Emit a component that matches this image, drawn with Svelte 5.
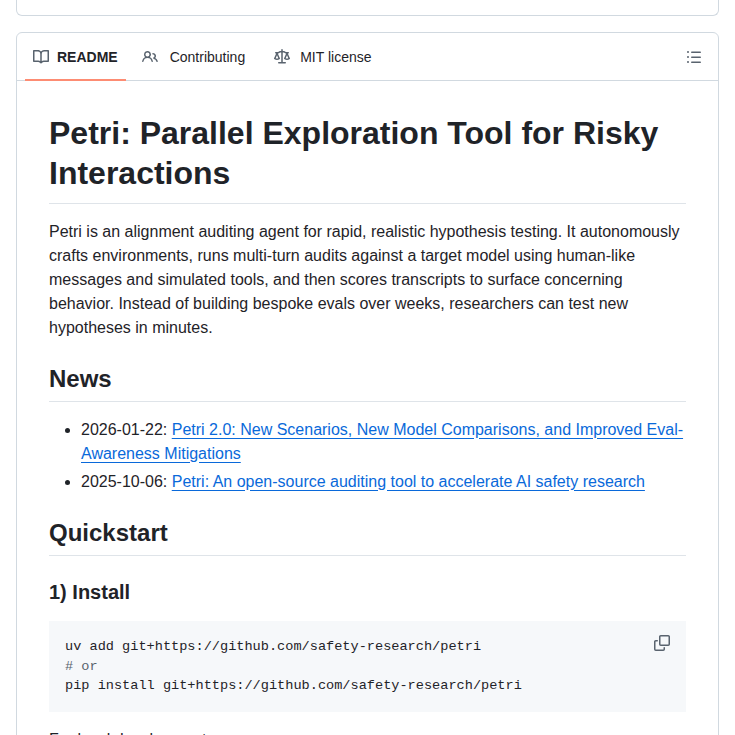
<script>
  const tabs = [
    { label: 'README', icon: 'book', active: true },
    { label: 'Contributing', icon: 'people' },
    { label: 'MIT license', icon: 'law' }
  ]
  const icons = {
    book: 'M0 1.75A.75.75 0 0 1 .75 1h4.253c1.227 0 2.317.59 3 1.501A3.743 3.743 0 0 1 11.006 1h4.245a.75.75 0 0 1 .75.75v10.5a.75.75 0 0 1-.75.75h-4.507a2.25 2.25 0 0 0-1.591.659l-.622.621a.75.75 0 0 1-1.06 0l-.622-.621A2.25 2.25 0 0 0 5.258 13H.75a.75.75 0 0 1-.75-.75Zm7.251 10.324.004-5.073-.002-2.253A2.25 2.25 0 0 0 5.003 2.5H1.5v9h3.757a3.75 3.75 0 0 1 1.994.574ZM8.755 4.75l-.004 7.322a3.752 3.752 0 0 1 1.992-.572H14.5v-9h-3.495a2.25 2.25 0 0 0-2.25 2.25Z',
    people: 'M2 5.5a3.5 3.5 0 1 1 5.898 2.549 5.508 5.508 0 0 1 3.034 4.084.75.75 0 1 1-1.482.235 4 4 0 0 0-7.9 0 .75.75 0 0 1-1.482-.236A5.507 5.507 0 0 1 3.102 8.05 3.493 3.493 0 0 1 2 5.5ZM11 4a3.001 3.001 0 0 1 2.22 5.018 5.01 5.01 0 0 1 2.56 3.012.749.749 0 0 1-.885.954.752.752 0 0 1-.549-.514 3.507 3.507 0 0 0-2.522-2.372.75.75 0 0 1-.574-.73v-.352a.75.75 0 0 1 .416-.672A1.5 1.5 0 0 0 11 5.5.75.75 0 0 1 11 4Zm-5.5-.5a2 2 0 1 0-.001 3.999A2 2 0 0 0 5.5 3.5Z',
    law: 'M8.75.75V2h.985c.304 0 .603.08.867.231l1.29.736c.038.022.08.033.124.033h2.234a.75.75 0 0 1 0 1.5h-.427l2.111 4.692a.75.75 0 0 1-.154.838l-.53-.53.529.531-.001.002-.002.002-.006.006-.006.005-.01.01-.045.04c-.21.176-.441.327-.686.45C14.556 10.78 13.88 11 13 11a4.498 4.498 0 0 1-2.023-.454 3.544 3.544 0 0 1-.686-.45l-.045-.04-.016-.015-.006-.006-.004-.004v-.001a.75.75 0 0 1-.154-.838L12.178 4.5h-.162c-.305 0-.604-.079-.868-.231l-1.29-.736a.245.245 0 0 0-.124-.033H8.75V13h2.5a.75.75 0 0 1 0 1.5h-6.5a.75.75 0 0 1 0-1.5h2.5V3.5h-.984a.245.245 0 0 0-.124.033l-1.289.737c-.265.15-.564.23-.869.23h-.162l2.112 4.692a.75.75 0 0 1-.154.838l-.53-.53.529.531-.001.002-.002.002-.006.006-.016.015-.045.04c-.21.176-.441.327-.686.45C4.556 10.78 3.88 11 3 11a4.498 4.498 0 0 1-2.023-.454 3.544 3.544 0 0 1-.686-.45l-.045-.04-.016-.015-.006-.006-.004-.004v-.001a.75.75 0 0 1-.154-.838L2.178 4.5H1.75a.75.75 0 0 1 0-1.5h2.234a.249.249 0 0 0 .125-.033l1.288-.737c.265-.15.564-.23.869-.23h.984V.75a.75.75 0 0 1 1.5 0Zm2.945 8.477c.285.135.718.273 1.305.273s1.02-.138 1.305-.273L13 6.327Zm-10 0c.285.135.718.273 1.305.273s1.02-.138 1.305-.273L3 6.327Z'
  }
</script>

<div class="page">
  <div class="card-stub"></div>

  <div class="card">
    <nav class="tabbar">
      <ul class="tabs">
        {#each tabs as tab}
          <li class="tab {tab.icon}" class:active={tab.active}>
            <svg class="icon" viewBox="0 0 16 16" width="16" height="16"><path d={icons[tab.icon]} /></svg>
            <span>{tab.label}</span>
          </li>
        {/each}
      </ul>
      <svg class="icon outline" viewBox="0 0 16 16" width="16" height="16"><path d="M5.75 2.5h8.5a.75.75 0 0 1 0 1.5h-8.5a.75.75 0 0 1 0-1.5Zm0 5h8.5a.75.75 0 0 1 0 1.5h-8.5a.75.75 0 0 1 0-1.5Zm0 5h8.5a.75.75 0 0 1 0 1.5h-8.5a.75.75 0 0 1 0-1.5ZM2 14a1 1 0 1 1 0-2 1 1 0 0 1 0 2Zm1-6a1 1 0 1 1-2 0 1 1 0 0 1 2 0ZM2 4a1 1 0 1 1 0-2 1 1 0 0 1 0 2Z" /></svg>
    </nav>

    <article class="markdown">
      <h1>Petri: Parallel Exploration Tool for Risky Interactions</h1>
      <p>Petri is an alignment auditing agent for rapid, realistic hypothesis testing. It autonomously crafts environments, runs multi-turn audits against a target model using human-like messages and simulated tools, and then scores transcripts to surface concerning behavior. Instead of building bespoke evals over weeks, researchers can test new hypotheses in minutes.</p>

      <h2>News</h2>
      <ul class="news">
        <li>2026-01-22: <a href="#a">Petri 2.0: New Scenarios, New Model Comparisons, and Improved Eval-Awareness Mitigations</a></li>
        <li>2025-10-06: <a href="#b">Petri: An open-source auditing tool to accelerate AI safety research</a></li>
      </ul>

      <h2>Quickstart</h2>
      <h3>1) Install</h3>
      <div class="code">
        <pre>uv add git+https://github.com/safety-research/petri
<span class="comment"># or</span>
pip install git+https://github.com/safety-research/petri</pre>
        <svg class="copy" viewBox="0 0 16 16" width="16" height="16"><path d="M0 6.75C0 5.784.784 5 1.75 5h1.5a.75.75 0 0 1 0 1.5h-1.5a.25.25 0 0 0-.25.25v7.5c0 .138.112.25.25.25h7.5a.25.25 0 0 0 .25-.25v-1.5a.75.75 0 0 1 1.5 0v1.5A1.75 1.75 0 0 1 9.25 16h-7.5A1.75 1.75 0 0 1 0 14.25Z" /><path d="M5 1.75C5 .784 5.784 0 6.75 0h7.5C15.216 0 16 .784 16 1.75v7.5A1.75 1.75 0 0 1 14.25 11h-7.5A1.75 1.75 0 0 1 5 9.25Zm1.75-.25a.25.25 0 0 0-.25.25v7.5c0 .138.112.25.25.25h7.5a.25.25 0 0 0 .25-.25v-7.5a.25.25 0 0 0-.25-.25Z" /></svg>
      </div>
      <p>For local development:</p>
    </article>
  </div>
</div>

<style>
  :global(body) {
    background: #fff;
    overflow: hidden;
  }

  .page {
    height: 735px;
    overflow: hidden;
    padding: 0 16px;
    box-sizing: border-box;
    font-family: "Liberation Sans", Arial, sans-serif;
    color: #1f2328;
    font-size: 16px;
    line-height: 1.5;
  }

  .card-stub {
    height: 16px;
    box-sizing: border-box;
    border: 1px solid #d1d9e0;
    border-top: 0;
    border-radius: 0 0 6px 6px;
    margin-bottom: 16px;
  }

  .card {
    border: 1px solid #d1d9e0;
    border-radius: 6px;
  }

  .tabbar {
    display: flex;
    align-items: center;
    justify-content: space-between;
    border-bottom: 1px solid #d1d9e0;
    padding: 0 16px 0 8px;
  }

  .tabs {
    display: flex;
    list-style: none;
    margin: 0 0 -1px;
    padding: 0;
    height: 48px;
  }

  .tab {
    display: flex;
    align-items: center;
    gap: 12px;
    padding: 0 8px;
    margin-right: 13px;
    font-size: 14px;
    position: relative;
  }

  .tab.law {
    gap: 10px;
  }

  .tab.active {
    gap: 8px;
    margin-right: 8px;
    font-weight: 600;
  }

  .tab.active::after {
    content: "";
    position: absolute;
    left: 0;
    right: 0;
    bottom: 0;
    height: 2px;
    background: #fd8c73;
  }

  .icon, .copy {
    fill: #59636e;
    display: block;
    flex-shrink: 0;
  }

  .outline {
    margin-top: 1px;
  }

  .markdown {
    padding: 32px;
  }

  h1, h2 {
    font-weight: 600;
    line-height: 1.25;
    border-bottom: 1px solid #d1d9e0b3;
  }

  h1 {
    font-size: 32px;
    margin: 0 0 16px;
    padding-bottom: 9.6px;
  }

  h2 {
    font-size: 24px;
    margin: 24px 0 16px;
    padding-bottom: 7.2px;
  }

  h3 {
    font-size: 20px;
    font-weight: 600;
    line-height: 1.25;
    margin: 24px 0 16px;
  }

  p {
    margin: 0 0 16px;
  }

  a {
    color: #0969da;
    text-decoration: underline;
    text-underline-offset: 3.2px;
  }

  .news {
    margin: 0 0 16px;
    padding-left: 32px;
  }

  .news li + li {
    margin-top: 4px;
  }

  .code {
    position: relative;
    background: #f6f8fa;
    margin-bottom: 16px;
  }

  pre {
    margin: 0;
    padding: 16px;
    font-family: "Liberation Mono", monospace;
    font-size: 13.6px;
    line-height: 1.45;
    color: #1f2328;
  }

  .comment {
    color: #59636e;
  }

  .copy {
    position: absolute;
    top: 14px;
    right: 16px;
  }
</style>
